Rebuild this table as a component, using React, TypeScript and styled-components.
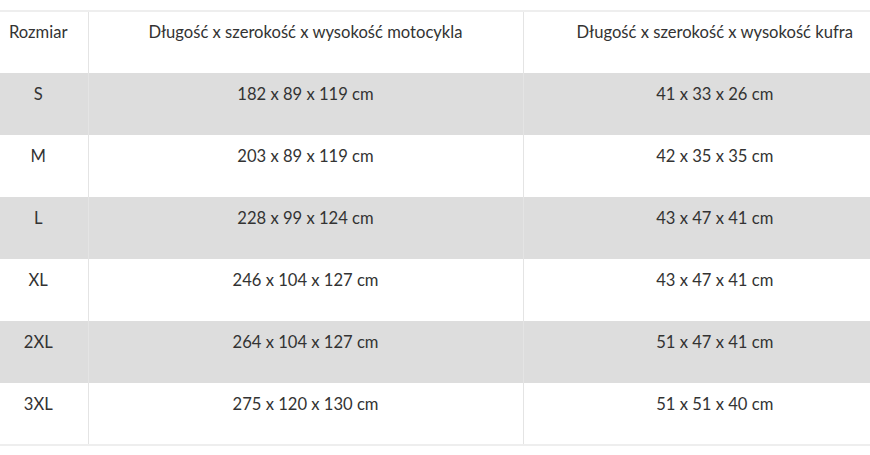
import React from "react";
import styled, { createGlobalStyle } from "styled-components";

const GlobalStyle = createGlobalStyle`
	html, body {
		margin: 0;
		padding: 0;
		background: #ffffff;
		overflow: hidden;
	}
	body {
		font-family: "Source Sans Pro", Lato, "Liberation Sans", sans-serif;
		color: #333333;
	}
`;

const Wrapper = styled.div`
	padding-top: 10px;
	margin-left: -11px;
	width: 917px;
`;

const Table = styled.table`
	width: 100%;
	border-collapse: collapse;
	table-layout: fixed;
	border-top: 2px solid #eeeeee;
	border-bottom: 2px solid #eeeeee;
	font-size: 16.6px;
	line-height: 24px;
`;

const Head = styled.th<{ $w: number }>`
	width: ${(p) => p.$w}px;
	height: 62px;
	box-sizing: border-box;
	padding: 8px 0 0;
	vertical-align: top;
	font-weight: 400;
	text-align: center;
	border-left: 1px solid #e4e4e4;
	&:first-child {
		border-left: none;
	}
`;

const Row = styled.tr<{ $shaded: boolean }>`
	background: ${(p) => (p.$shaded ? "#dddddd" : "#ffffff")};
`;

const Cell = styled.td`
	height: 62px;
	padding: 9px 0 0;
	box-sizing: border-box;
	vertical-align: top;
	text-align: center;
	border-left: 1px solid #e4e4e4;
	&:first-child {
		border-left: none;
	}
`;

const rows = [
	["S", "182 x 89 x 119 cm", "41 x 33 x 26 cm"],
	["M", "203 x 89 x 119 cm", "42 x 35 x 35 cm"],
	["L", "228 x 99 x 124 cm", "43 x 47 x 41 cm"],
	["XL", "246 x 104 x 127 cm", "43 x 47 x 41 cm"],
	["2XL", "264 x 104 x 127 cm", "51 x 47 x 41 cm"],
	["3XL", "275 x 120 x 130 cm", "51 x 51 x 40 cm"],
];

export default function App() {
	return (
		<>
			<GlobalStyle />
			<Wrapper>
				<Table>
					<thead>
						<tr>
							<Head $w={99}>Rozmiar</Head>
							<Head $w={435}>Długość x szerokość x wysokość motocykla</Head>
							<Head $w={383}>Długość x szerokość x wysokość kufra</Head>
						</tr>
					</thead>
					<tbody>
						{rows.map((r, i) => (
							<Row key={r[0]} $shaded={i % 2 === 0}>
								<Cell>{r[0]}</Cell>
								<Cell>{r[1]}</Cell>
								<Cell>{r[2]}</Cell>
							</Row>
						))}
					</tbody>
				</Table>
			</Wrapper>
		</>
	);
}
